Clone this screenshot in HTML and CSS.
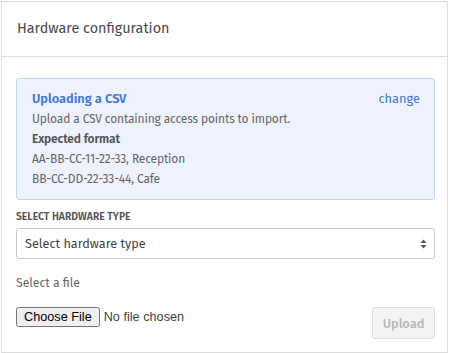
FILE: index.html
```html
<!DOCTYPE html>
<html>
<head>
<meta charset="utf-8">
<link rel="stylesheet" href="styles.css">
</head>
<body>
<div class="card">
  <div class="card-header">Hardware configuration</div>
  <div class="card-body">
    <div class="info">
      <div class="info-top">
        <span class="info-title">Uploading a CSV</span>
        <a class="change">change</a>
      </div>
      <div class="line">Upload a CSV containing access points to import.</div>
      <div class="line bold">Expected format</div>
      <div class="line">AA-BB-CC-11-22-33, Reception</div>
      <div class="line">BB-CC-DD-22-33-44, Cafe</div>
    </div>
    <div class="label">SELECT HARDWARE TYPE</div>
    <div class="select">
      <span>Select hardware type</span>
      <svg width="7" height="10" viewBox="0 0 7 10"><path d="M3.5 0.5 L6.5 4 L0.5 4 Z M3.5 9.5 L6.5 6 L0.5 6 Z" fill="#555"/></svg>
    </div>
    <div class="file-label">Select a file</div>
    <div class="file-row">
      <input type="file" class="file">
      <button class="upload">Upload</button>
    </div>
  </div>
</div>
</body>
</html>
```
FILE: styles.css
```css
html, body { margin: 0; padding: 0; background: #fff; }
body { padding: 1px 4px 0 1px; font-family: "Fira Sans", "Open Sans", "Noto Sans", sans-serif; color: #666; }
.card {
  width: 447px; height: 352px; box-sizing: border-box;
  border: 1px solid #dcdcdc; background: #fff;
  display: flex; flex-direction: column;
}
.card-header {
  height: 55px; box-sizing: border-box; border-bottom: 1px solid #dcdcdc;
  padding: 17px 0 0 15px; font-size: 14.4px; color: #4a4a4a; line-height: 20px;
}
.card-body { padding: 21px 12px 0 14px; }
.info {
  background: #eef2fc; border: 1px solid #c3d4f3; border-radius: 3px;
  padding: 10px 14px 10px 15px; font-size: 12px; letter-spacing: -0.15px; line-height: 20px;
}
.info-top { display: flex; justify-content: space-between; align-items: center; }
.info-title { font-weight: 600; color: #3f77d8; font-size: 12.8px; letter-spacing: 0; }
.change { color: #3f77d8; font-size: 12.8px; letter-spacing: 0; }
.bold { font-weight: 600; color: #555; }
.label { font-size: 10.4px; font-weight: 600; color: #555; margin-top: 10px; line-height: 13px; }
.select {
  margin-top: 5px; height: 31px; box-sizing: border-box;
  border: 1px solid #c8c8cc; border-radius: 3px;
  display: flex; align-items: center; justify-content: space-between;
  padding: 0 7px 0 8px; font-size: 12.7px; color: #444;
}
.file-label { margin-top: 16px; font-size: 12.2px; line-height: 16px; color: #666; }
.file-row { display: flex; justify-content: space-between; align-items: flex-start; margin-top: 16px; }
.file { font-family: "Liberation Sans", Arial, sans-serif; font-size: 12.7px; color: #444; margin: 0; }
.upload {
  width: 63px; height: 32px; margin: 0;
  border: 1px solid #dcdde0; border-radius: 3px; background: #f2f3f5;
  color: #b4b6bb; font-family: inherit; font-size: 12.8px; font-weight: 500;
}
```
